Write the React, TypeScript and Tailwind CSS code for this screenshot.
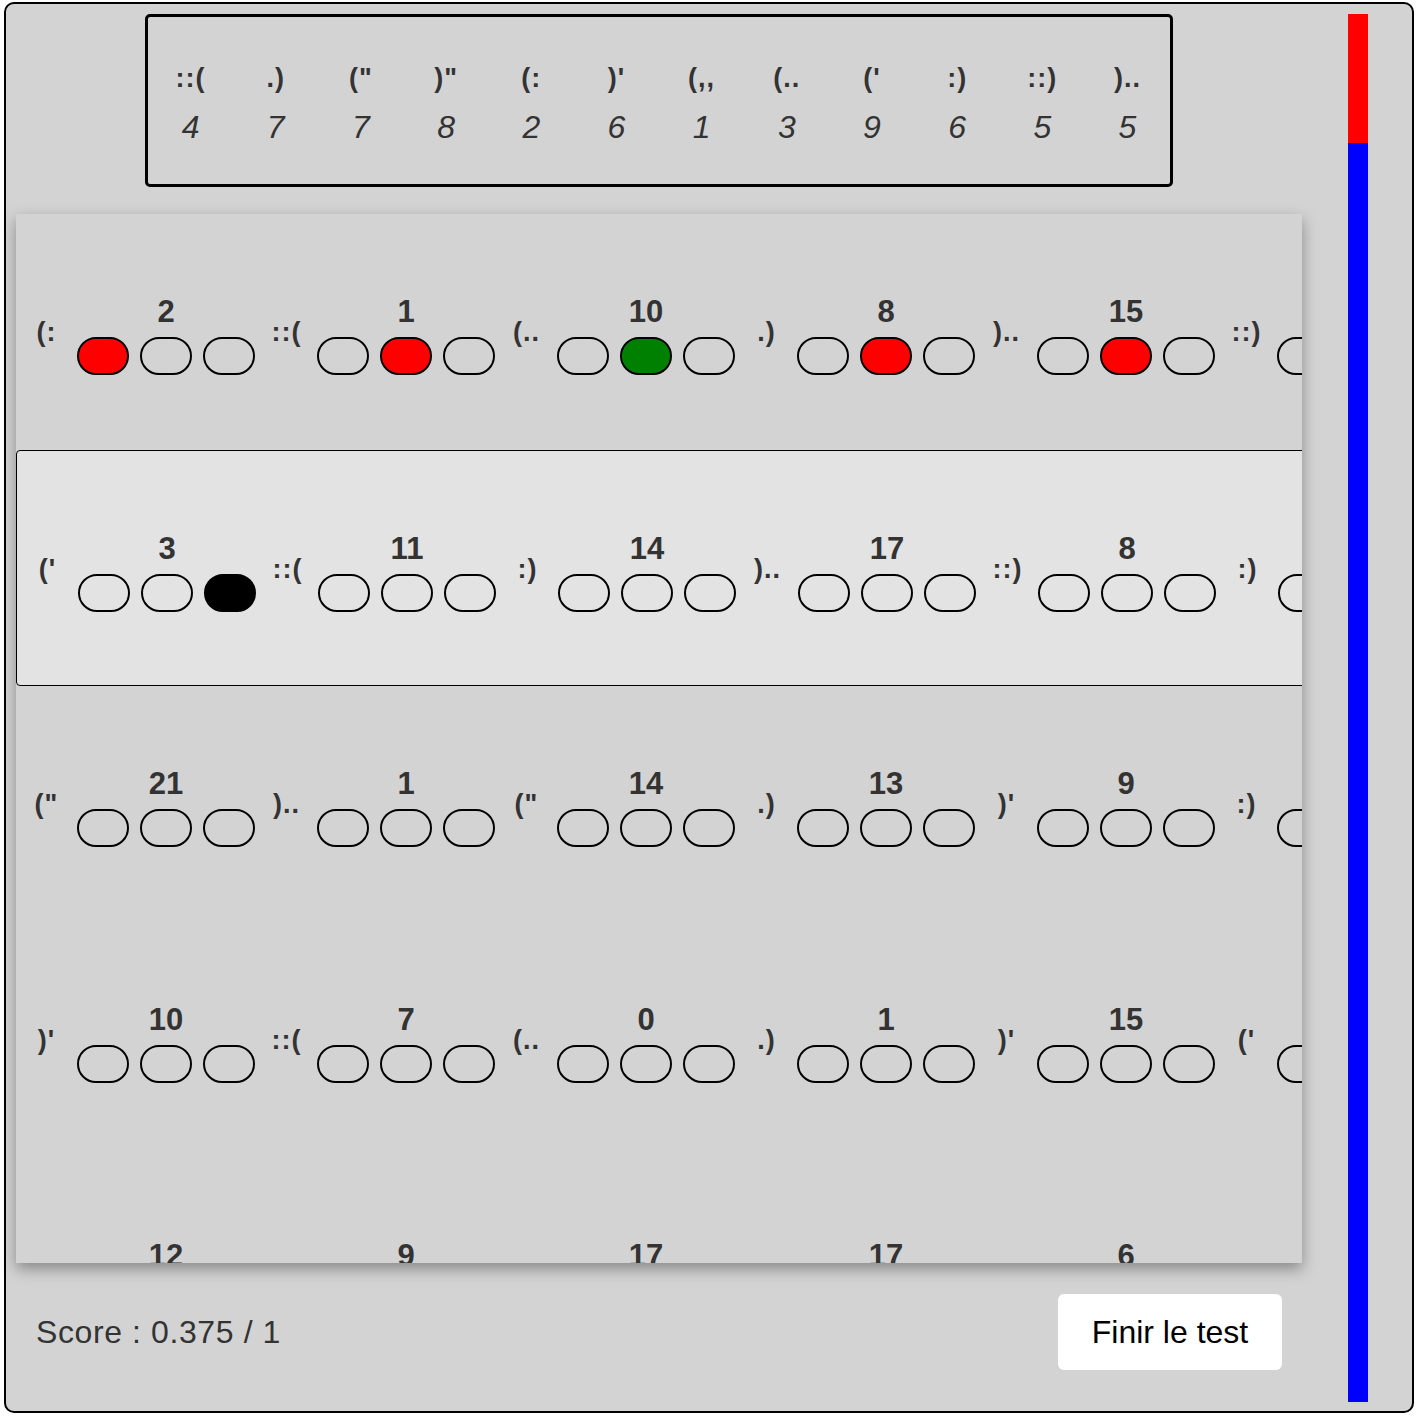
import { FC } from "react";

type Slot = "" | "red" | "green" | "black";

interface Group {
  label: string;
  value?: number;
  slots: Slot[];
}

const legend = [
  { symbol: "::(", count: 4 },
  { symbol: ".)", count: 7 },
  { symbol: "(\"", count: 7 },
  { symbol: ")\"", count: 8 },
  { symbol: "(:", count: 2 },
  { symbol: ")'", count: 6 },
  { symbol: "(,,", count: 1 },
  { symbol: "(..", count: 3 },
  { symbol: "('", count: 9 },
  { symbol: ":)", count: 6 },
  { symbol: "::)", count: 5 },
  { symbol: ")..", count: 5 },
];

const empty: Slot[] = ["", "", ""];

// last group of each row sits past the panel edge, only its label and first bubble show
const rows: Group[][] = [
  [
    { label: "(:", value: 2, slots: ["red", "", ""] },
    { label: "::(", value: 1, slots: ["", "red", ""] },
    { label: "(..", value: 10, slots: ["", "green", ""] },
    { label: ".)", value: 8, slots: ["", "red", ""] },
    { label: ")..", value: 15, slots: ["", "red", ""] },
    { label: "::)", slots: empty },
  ],
  [
    { label: "('", value: 3, slots: ["", "", "black"] },
    { label: "::(", value: 11, slots: empty },
    { label: ":)", value: 14, slots: empty },
    { label: ")..", value: 17, slots: empty },
    { label: "::)", value: 8, slots: empty },
    { label: ":)", slots: empty },
  ],
  [
    { label: "(\"", value: 21, slots: empty },
    { label: ")..", value: 1, slots: empty },
    { label: "(\"", value: 14, slots: empty },
    { label: ".)", value: 13, slots: empty },
    { label: ")'", value: 9, slots: empty },
    { label: ":)", slots: empty },
  ],
  [
    { label: ")'", value: 10, slots: empty },
    { label: "::(", value: 7, slots: empty },
    { label: "(..", value: 0, slots: empty },
    { label: ".)", value: 1, slots: empty },
    { label: ")'", value: 15, slots: empty },
    { label: "('", slots: empty },
  ],
  // only the top of this row's numbers peeks above the panel bottom
  [
    { label: "", value: 12, slots: empty },
    { label: "", value: 9, slots: empty },
    { label: "", value: 17, slots: empty },
    { label: "", value: 17, slots: empty },
    { label: "", value: 6, slots: empty },
    { label: "", slots: empty },
  ],
];

const slotClass: Record<Slot, string> = {
  "": "bg-transparent",
  red: "bg-[#ff0000]",
  green: "bg-[#008000]",
  black: "bg-black",
};

const GroupCell: FC<{ group: Group }> = ({ group }) => (
  <div className="flex w-[240px] shrink-0 items-start">
    <div className="h-[132px] w-[61px] pt-[105px] text-center text-[27px] font-bold leading-none tracking-[1px] text-[#333]">
      {group.label}
    </div>
    <div className="flex flex-col items-center pt-[82px]">
      <div className="h-[31px] text-[31px] font-bold leading-none text-[#333]">{group.value}</div>
      <div className="mt-[10px] flex gap-[11px]">
        {group.slots.map((slot, i) => (
          <div
            key={i}
            className={`h-[38px] w-[52px] rounded-full border-2 border-black ${slotClass[slot]}`}
          />
        ))}
      </div>
    </div>
  </div>
);

export default function App() {
  return (
    <div className="min-h-screen bg-white pl-[4px] pt-[2px] font-['Liberation_Sans',Arial,sans-serif]">
      <div className="flex h-[1411px] w-[1410px] rounded-[10px] border-2 border-black bg-[#d3d3d3] pl-[10px] pt-[10px]">
        {/* left column */}
        <div className="flex w-[1286px] flex-col">
          {/* legend */}
          <div className="mx-auto flex h-[173px] w-[1028px] rounded-[5px] border-[3px] border-black">
            {legend.map((item, i) => (
              <div key={i} className="flex flex-1 flex-col items-center pt-[48px]">
                <div className="text-[27px] font-bold leading-none tracking-[1px] text-[#333]">{item.symbol}</div>
                <div className="mt-[19px] text-[32px] italic leading-none text-[#333]">{item.count}</div>
              </div>
            ))}
          </div>

          {/* answer sheet */}
          <div className="mt-[27px] h-[1049px] overflow-hidden bg-[#d3d3d3] shadow-[0_6px_14px_rgba(0,0,0,0.35)]">
            {rows.map((row, r) => (
              <div
                key={r}
                className={
                  r === 1
                    ? "box-border flex h-[236px] w-max rounded-[4px] border-[1.5px] border-black bg-[#e3e3e3]"
                    : "flex h-[236px] w-max"
                }
              >
                {row.map((group, g) => (
                  <GroupCell key={g} group={group} />
                ))}
              </div>
            ))}
          </div>

          {/* footer */}
          <div className="mt-[31px] flex items-center justify-between px-[20px]">
            <span className="text-[32px] tracking-[0.6px] text-[#333]">Score : 0.375 / 1</span>
            <button className="h-[76px] w-[224px] rounded-[6px] bg-white text-[32px] text-black">
              Finir le test
            </button>
          </div>
        </div>

        {/* timer bar */}
        <div className="ml-[46px] flex h-[1388px] w-[20px] flex-col">
          <div className="h-[129px] bg-[#ff0000]" />
          <div className="flex-1 bg-[#0000ff]" />
        </div>
      </div>
    </div>
  );
}
